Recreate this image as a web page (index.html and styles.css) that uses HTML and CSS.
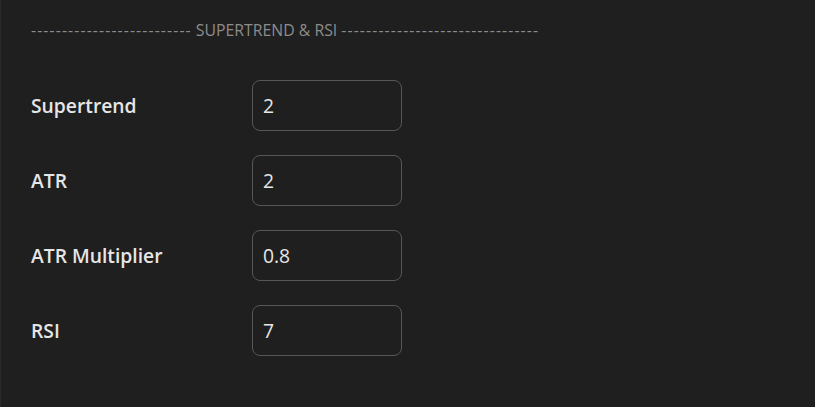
FILE: index.html
```html
<!DOCTYPE html>
<html>
<head>
<meta charset="utf-8">
<link rel="stylesheet" href="styles.css">
</head>
<body>
<div class="panel">
  <div class="section-title"><span class="dashes">--------------------------</span> SUPERTREND &amp; RSI <span class="dashes">--------------------------------</span></div>
  <div class="rows">
    <div class="row"><label class="label">Supertrend</label><div class="input">2</div></div>
    <div class="row"><label class="label">ATR</label><div class="input">2</div></div>
    <div class="row"><label class="label">ATR Multiplier</label><div class="input">0.8</div></div>
    <div class="row"><label class="label">RSI</label><div class="input">7</div></div>
  </div>
</div>
</body>
</html>
```
FILE: styles.css
```css
html, body {
  margin: 0;
  padding: 0;
  background: #1f1f1f;
  width: 815px;
  height: 407px;
  overflow: hidden;
}
.panel {
  box-sizing: border-box;
  height: 407px;
  border-left: 1px solid #2a2a2a;
  padding: 20px 0 0 30px;
  font-family: "Open Sans", "Noto Sans", sans-serif;
}
.section-title {
  color: #8c8c8c;
  font-size: 15.8px;
  line-height: 20px;
  white-space: nowrap;
}
.dashes {
  letter-spacing: 1.1px;
}
.rows {
  margin-top: 40px;
  display: flex;
  flex-direction: column;
  gap: 24px;
}
.row {
  display: flex;
  align-items: center;
}
.label {
  width: 221px;
  color: #e6e6e6;
  font-size: 19.3px;
  font-weight: 600;
}
.input {
  box-sizing: border-box;
  width: 150px;
  height: 51px;
  border: 1px solid #575757;
  border-radius: 8px;
  padding: 0 10px;
  display: flex;
  align-items: center;
  color: #e6e6e6;
  font-size: 19.3px;
  font-weight: 500;
}
```
